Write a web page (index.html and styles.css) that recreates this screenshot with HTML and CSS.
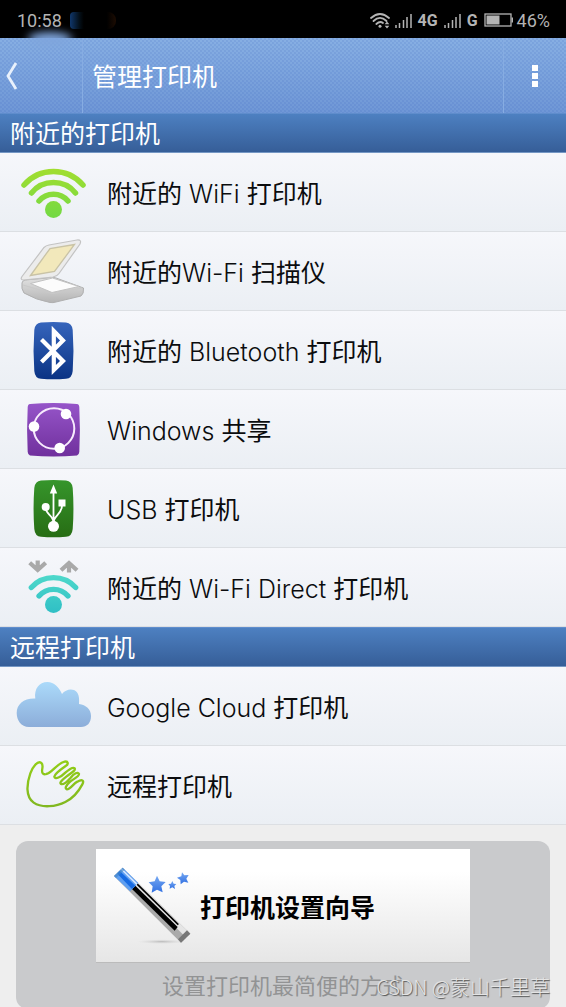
FILE: index.html
```html
<!DOCTYPE html>
<html lang="zh-CN">
<head>
<meta charset="utf-8">
<meta name="viewport" content="width=device-width, initial-scale=1">
<title>管理打印机</title>
<link rel="stylesheet" href="styles.css">
</head>
<body>
<div class="status">
  <time class="clock">10:58</time>
  <span class="notification" aria-hidden="true"></span>
  <div class="indicators">
    <svg class="status-wifi" viewBox="0 0 20 17" aria-hidden="true">
      <g fill="none" stroke="currentColor" stroke-width="1.8" stroke-linecap="round">
        <path d="M1 6Q10 -2 19 6"/><path d="M3.5 9Q10 2.700 16.500 9"/><path d="M6.300 12Q10 8.500 13 11"/>
      </g>
      <circle cx="10" cy="14.300" r="1.500" fill="currentColor"/>
      <path d="M17 9.500l2.300 2.700h-4.600zM17 16.500l2.300-2.700h-4.600z" fill="currentColor"/>
    </svg>
    <svg class="signal" viewBox="0 0 17 15" aria-hidden="true"><path d="M1 12v3M4.500 10v5M8.500 7v8M12 4v11M16 1v14" stroke="currentColor" stroke-width="1.500"/></svg>
    <b class="network">4G</b>
    <svg class="signal" viewBox="0 0 17 15" aria-hidden="true"><path d="M1 12v3M4.500 10v5M8.500 7v8M12 4v11M16 1v14" stroke="currentColor" stroke-width="1.500"/></svg>
    <b class="network">G</b>
    <svg class="battery" viewBox="0 0 30 14" aria-hidden="true"><rect x="1" y="1" width="26" height="12" fill="none" stroke="currentColor" stroke-width="1.300"/><path d="M2.500 2.500h13v9h-13zM27.500 4.500H29v5h-1.500z" fill="currentColor"/></svg>
    <span class="percent">46%</span>
  </div>
</div>

<header class="header">
  <span class="glow" aria-hidden="true"></span>
  <button class="back" type="button" aria-label="返回">
    <svg class="back-icon" viewBox="0 0 12 28" aria-hidden="true"><path d="M10 1L2 14L10 27" fill="none" stroke="#e9f1fc" stroke-width="2.800"/></svg>
  </button>
  <h1 class="title">管理打印机</h1>
  <button class="more" type="button" aria-label="更多选项">
    <svg class="more-icon" viewBox="0 0 6 22" aria-hidden="true"><path d="M0 0h6v6H0zM0 8h6v6H0zM0 16h6v6H0z" fill="#fff"/></svg>
  </button>
</header>

<main>
  <section>
    <h2 class="section-title">附近的打印机</h2>
    <ul class="list">
      <li><a class="row" href="#wifi">
        <svg class="icon" viewBox="0 0 75 79" aria-hidden="true">
          <defs><linearGradient id="green" gradientUnits="userSpaceOnUse" x1="0" y1="15" x2="0" y2="65"><stop stop-color="#a3de30"/><stop offset="1" stop-color="#72d944"/></linearGradient></defs>
          <g fill="none" stroke="url(#green)" stroke-width="5.500" stroke-linecap="round"><path d="M8 32A39 39 0 0 1 67 32"/><path d="M15.500 40A28.500 28.500 0 0 1 59.500 40"/><path d="M23 48A19 19 0 0 1 52 48"/></g>
          <circle cx="37.500" cy="56.500" r="8.500" fill="url(#green)"/>
        </svg>
        <span class="label">附近的 <span class="latin">WiFi</span> 打印机</span></a></li>
      <li><a class="row" href="#scanner">
        <svg class="icon" viewBox="0 0 75 79" aria-hidden="true">
          <defs><linearGradient id="base" x1="0" y1="0" x2="0" y2="1"><stop stop-color="#e2e2e2"/><stop offset="1" stop-color="#b4b4b4"/></linearGradient></defs>
          <path d="M6 51Q5 57 8 61Q20 68 34 70.500Q37 71 40 70L65 64Q68 62 67.500 56L40 46Q36 44 31 46L9 48Q6 49 6 51Z" fill="url(#base)" stroke="#b0b0b0"/>
          <path d="M7 53L34 61Q37 62 40 61L66 56" fill="none" stroke="#c9c9c9"/>
          <path d="M14.500 51.500L36.500 46L63 54.500L36 60.500Z" fill="#fcfcfc" stroke="#c2c2c2"/>
          <path d="M6 44.500L28 15.500Q30 13.500 33 13L61 8Q66 7.500 64 12L43 41.500Q41 44.500 37 45L7 48Q4 47.500 6 44.500Z" fill="#ececec" stroke="#c3c3c3" stroke-width="1.200"/>
          <path d="M14.500 43.500L34 16.500L58.500 12.500L38.500 39.500Z" fill="#f2e8bb" stroke="#c9c3a6" stroke-width="1.300"/>
        </svg>
        <span class="label">附近的<span class="latin">Wi-Fi</span> 扫描仪</span></a></li>
      <li><a class="row" href="#bluetooth">
        <svg class="icon" viewBox="0 0 75 79" aria-hidden="true">
          <defs><linearGradient id="blue" x1="0" y1="0" x2="0" y2="1"><stop stop-color="#3665bc"/><stop offset="1" stop-color="#0a3384"/></linearGradient></defs>
          <path d="M25 11.500Q37.500 10.500 50 11.500Q56 12 56.700 19Q58.200 39.500 56.700 60Q56 67.500 50 67.700Q37.500 68.700 25 67.700Q19 67.500 18.300 60Q16.800 39.500 18.300 19Q19 12 25 11.500Z" fill="url(#blue)"/>
          <path d="M25.500 28.500L47 50L37.800 59V20L47 29.500L25.500 51" fill="none" stroke="#fff" stroke-width="4.200" stroke-miterlimit="6"/>
        </svg>
        <span class="label">附近的 <span class="latin">Bluetooth</span> 打印机</span></a></li>
      <li><a class="row" href="#windows">
        <svg class="icon" viewBox="0 0 75 79" aria-hidden="true">
          <defs><linearGradient id="purple" x1="0" y1="0" x2="0" y2="1"><stop stop-color="#9655c9"/><stop offset="1" stop-color="#70309d"/></linearGradient></defs>
          <path d="M14 14Q37.500 12 61 14Q63 14 63.300 17Q64.500 39.500 63.300 62Q63 65 61 65.500Q37.500 67.300 14 65.500Q12 65 11.700 62Q10.500 39.500 11.700 17Q12 14 14 14Z" fill="url(#purple)"/>
          <circle cx="38" cy="38.500" r="20.300" fill="none" stroke="#f7eafd" stroke-width="2"/><g fill="#fff"><circle cx="50" cy="24" r="5.300"/><circle cx="18" cy="36.500" r="5.300"/><circle cx="43.700" cy="58" r="5.300"/></g>
        </svg>
        <span class="label"><span class="latin">Windows</span> 共享</span></a></li>
      <li><a class="row" href="#usb">
        <svg class="icon" viewBox="0 0 75 79" aria-hidden="true">
          <defs><linearGradient id="usb" x1="0" y1="0" x2="0" y2="1"><stop stop-color="#36952b"/><stop offset="1" stop-color="#276d14"/></linearGradient></defs>
          <path d="M25 11.500Q37.500 10.500 50 11.500Q56 12 56.700 19Q58.200 39.500 56.700 60Q56 67.500 50 67.700Q37.500 68.700 25 67.700Q19 67.500 18.300 60Q16.800 39.500 18.300 19Q19 12 25 11.500Z" fill="url(#usb)"/>
          <g fill="#fff"><path d="M37.500 15.500L41.200 24.500H33.800ZM42.500 30.500h7v7h-7z"/><circle cx="29.700" cy="38" r="4"/><circle cx="37.500" cy="57.300" r="5.500"/></g>
          <path d="M37.500 23V57M29.700 39C30 46 37.500 46 37.500 54M46 36C46 46 37.500 46 37.500 54" fill="none" stroke="#fff" stroke-width="1.800"/>
        </svg>
        <span class="label"><span class="latin">USB</span> 打印机</span></a></li>
      <li><a class="row" href="#direct">
        <svg class="icon" viewBox="0 0 75 79" aria-hidden="true">
          <defs><linearGradient id="teal" gradientUnits="userSpaceOnUse" x1="0" y1="26" x2="0" y2="65"><stop stop-color="#4fd9cb"/><stop offset="1" stop-color="#2fbfc5"/></linearGradient></defs>
          <g fill="none" stroke="url(#teal)" stroke-width="5.300" stroke-linecap="round"><path d="M15.300 39.500A30 30 0 0 1 59.700 39.500"/><path d="M23 48A19 19 0 0 1 52 48"/></g><circle cx="37.500" cy="56.500" r="8.500" fill="url(#teal)"/>
          <path d="M21.700 12.500V22M13.700 14.700L21.700 22L29.700 14.700M53 24.500V16M45 22.300L53 15L61 22.300" fill="none" stroke="#a9a9a9" stroke-width="4.200"/>
        </svg>
        <span class="label">附近的 <span class="latin">Wi-Fi Direct</span> 打印机</span></a></li>
    </ul>
  </section>
  <section>
    <h2 class="section-title">远程打印机</h2>
    <ul class="list">
      <li><a class="row" href="#cloud">
        <svg class="icon" viewBox="0 0 75 79" aria-hidden="true">
          <defs><linearGradient id="cloud" x1="0" y1="0" x2="0" y2="1"><stop stop-color="#abdafa"/><stop offset="1" stop-color="#8cadd9"/></linearGradient></defs>
          <path d="M13 60C5 60 .700 53 .700 46C.700 37 8 31 19.300 31.500C18 22 23 15 31.500 15C38 15 43 20 46 27C49 23 54 21.500 58 23C63 25 63.500 31 63 37C70 38 75 42 75 49C75 56 71 60 65 60Z" fill="url(#cloud)"/>
        </svg>
        <span class="label"><span class="latin">Google Cloud</span> 打印机</span></a></li>
      <li><a class="row" href="#remote">
        <svg class="icon" viewBox="0 0 225 237" aria-hidden="true">
          <defs><linearGradient id="hand" gradientUnits="userSpaceOnUse" x1="0" y1="10" x2="0" y2="150"><stop stop-color="#92ce17"/><stop offset="1" stop-color="#81b720"/></linearGradient></defs>
          <path transform="translate(24 33)" d="M66 51C83 50 96 21 122 14C132 12 135 21 125 27C112 36 92 50 91 59C93 69 111 60 124 47C134 38 146 28 152 34C156 41 140 49 128 58C115 68 105 77 111 81C120 85 132 71 140 62C150 49 162 43 165 51C166 58 148 66 136 76C125 86 122 95 129 97C139 97 148 80 160 74C174 66 182 70 175 82C165 101 148 123 124 135C97 149 53 154 29 137C4 119 8 80 19 49C26 29 41 11 51 17C63 24 48 43 57 50Q61 53 66 51" fill="none" stroke="url(#hand)" stroke-width="7" stroke-linejoin="round"/>
        </svg>
        <span class="label">远程打印机</span></a></li>
    </ul>
  </section>
  <section class="setup">
    <button class="wizard" type="button">
      <svg class="wand" viewBox="0 0 255 270" aria-hidden="true">
        <defs>
          <radialGradient id="shadow"><stop stop-color="#bbb"/><stop offset="1" stop-color="#ddd" stop-opacity="0"/></radialGradient>
          <linearGradient id="star" x1="0" y1="0" x2="0" y2="1"><stop stop-color="#75a8f2"/><stop offset="1" stop-color="#3170e2"/></linearGradient>
        </defs>
        <ellipse cx="155" cy="242" rx="75" ry="7" fill="url(#shadow)"/>
        <path d="M12 45L38 20L241 218L213 245Z" fill="#aaa"/>
        <path d="M27 31L38 20L241 218L229 230Z" fill="#e5e5e5"/>
        <path d="M66 84L76 74L203 198L194 209Z" fill="#000"/>
        <path d="M80 68L205 191" stroke="#000" stroke-width="5"/>
        <path d="M12 45L38 20L85 66L60 91Z" fill="#5f9ff1"/>
        <path d="M22 38L29 30L76 74L66 84Z" fill="#176be3"/>
        <path d="M34 24L81 70" stroke="#d5e6ff" stroke-width="5"/>
        <path d="M12 45L38 20L44 26L18 51Z" fill="#4586c2" opacity=".6"/>
        <path d="M213 245L241 218L231 208L204 235Z" fill="#777"/>
        <g fill="url(#star)"><path d="M141 44L149 61L167 63L154 76L158 94L141 86L125 95L128 76L116 64L134 61Z"/><path d="M187 60L191 68L199 69L193 75L195 84L187 79L179 83L180 75L175 69L183 68Z"/><path d="M216 34L223 43L236 42L229 53L235 65L222 62L212 70L211 57L201 50L214 46Z"/></g>
      </svg>
      <span>打印机设置向导</span>
    </button>
    <p class="note">设置打印机最简便的方式</p>
    <span class="watermark">CSDN @蒙山千里草</span>
  </section>
</main>
</body>
</html>
```
FILE: styles.css
```css
* {
  box-sizing: border-box;
}

body {
  margin: 0;
  background: #eee;
  color: #0b0c0e;
  font-family: Inter, "Noto Sans CJK SC", sans-serif;
  font-size: 25px;
}

button {
  border: 0;
  padding: 0;
  background: none;
  color: inherit;
  font: inherit;
}

h1, h2, p, ul {
  margin: 0;
  padding: 0;
  font-weight: 400;
}

/* Status bar */
.status {
  display: flex;
  align-items: center;
  height: 38px;
  padding: 2px 16px 0 17px;
  background: #000;
  color: #b4b4b4;
  font-family: Roboto, sans-serif;
  font-size: 18px;
}

.notification {
  width: 46px;
  height: 17px;
  margin-left: 8px;
  border-radius: 4px 8px 8px 4px;
  background: linear-gradient(90deg, #10376b, #04101a 20%, #000 30%, #000 80%, #1c0c02);
}

.indicators {
  display: flex;
  align-items: center;
  margin-left: auto;
}

.status-wifi {
  width: 20px;
  height: 17px;
  margin-right: 5px;
}

.signal {
  width: 17px;
  height: 15px;
}

.network {
  margin: 0 6px;
  font-size: 16px;
}

.battery {
  width: 30px;
  height: 14px;
  margin-right: 3px;
}

/* Header */
.header {
  position: relative;
  display: flex;
  align-items: stretch;
  height: 75px;
  background:
    radial-gradient(circle at 1px 1px, rgba(60, 100, 190, .14) 1px, transparent 1px) 0 0 / 4px 4px,
    radial-gradient(circle at 1px 1px, rgba(60, 100, 190, .14) 1px, transparent 1px) 2px 2px / 4px 4px,
    linear-gradient(#87afe3, #6f97d6);
  color: #fff;
}

.glow {
  position: absolute;
  top: -6px;
  left: 28px;
  width: 44px;
  height: 14px;
  border-radius: 50%;
  background: #7fa5dc;
  filter: blur(4px);
}

.back {
  display: flex;
  align-items: center;
  width: 83px;
  padding-left: 6px;
  border-right: 1px solid #86ace2;
}

.back-icon {
  width: 12px;
  height: 28px;
}

.title {
  flex: 1;
  padding-left: 9px;
  font-size: 25px;
  line-height: 78px;
}

.more {
  display: flex;
  align-items: center;
  justify-content: center;
  width: 63px;
  border-left: 1px solid #86ace2;
}

.more-icon {
  width: 6px;
  height: 22px;
}

/* Printer lists */
.section-title {
  height: 40px;
  padding-left: 10px;
  border-top: 1px solid #5f8dcc;
  border-bottom: 1px solid #7597c4;
  background: linear-gradient(#4d80c1, #365e98);
  color: #fff;
  font-size: 25px;
  line-height: 40px;
}

.list {
  list-style: none;
}

.row {
  display: flex;
  align-items: center;
  gap: 16px;
  height: 79px;
  padding: 0 16px;
  border-bottom: 1px solid #dcdfe3;
  background: linear-gradient(#f6f7fb, #ebeff4);
  color: inherit;
  line-height: 36px;
  text-decoration: none;
}

.icon {
  flex: none;
  width: 75px;
  height: 79px;
}

.label {
  padding-top: 4px;
}

.latin {
  font-size: 25px;
  font-weight: 300;
}

/* Setup wizard */
.setup {
  position: relative;
  margin: 16px 16px 0;
  padding: 8px 0;
  border-radius: 12px;
  background: #c9cacc;
}

.wizard {
  display: flex;
  align-items: center;
  gap: 5px;
  width: 70%;
  height: 114px;
  margin: 0 auto;
  padding: 0 14px;
  border-bottom: 1px solid #bbb;
  background: linear-gradient(#fff 20%, #e6e6e6);
  color: #000;
  font-weight: 700;
}

.wand {
  flex: none;
  width: 85px;
  height: 90px;
}

.note {
  padding-top: 8px;
  color: #929394;
  font-size: 22px;
  line-height: 30px;
  text-align: center;
}

.watermark {
  position: absolute;
  right: 0;
  bottom: 8px;
  color: #e4e4e4;
  font-family: "Noto Sans CJK SC", sans-serif;
  font-size: 20px;
  font-weight: 300;
  line-height: 28px;
  text-shadow: 1px 1px 1px #555;
}
```
